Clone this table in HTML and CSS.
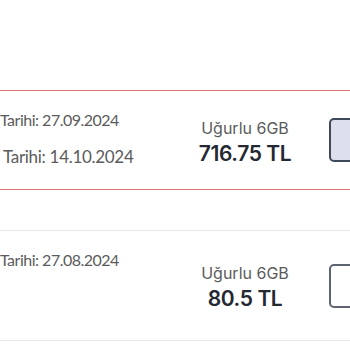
FILE: index.html
```html
<!DOCTYPE html>
<html lang="tr">
<head>
    <meta charset="UTF-8">
    <meta name="viewport" content="width=device-width, initial-scale=1.0">
    <title>Paketler</title>
    <link rel="stylesheet" href="styles.css">
</head>
<body>
    <div class="list">
        <div class="item selected">
            <div class="dates">
                <div class="date">Tarihi: 27.09.2024</div>
                <div class="date date-end">Tarihi: 14.10.2024</div>
            </div>
            <div class="package">
                <div class="package-name">Uğurlu 6GB</div>
                <div class="package-price">716.75 TL</div>
            </div>
            <div class="pick pick-active"></div>
        </div>

        <div class="item plain">
            <div class="dates">
                <div class="date">Tarihi: 27.08.2024</div>
            </div>
            <div class="package">
                <div class="package-name">Uğurlu 6GB</div>
                <div class="package-price">80.5 TL</div>
            </div>
            <div class="pick"></div>
        </div>
    </div>
</body>
</html>
```

FILE: styles.css
```css
body {
    margin: 0;
    padding: 0;
    background-color: #fff;
    overflow: hidden;
    font-family: 'Lato', sans-serif;
}
.list {
    width: 380px;
    padding-top: 90px;
}
.item {
    display: flex;
    align-items: center;
    box-sizing: border-box;
}
.selected {
    height: 100px;
    border-top: 1px solid #d77572;
    border-bottom: 1px solid #d77572;
}
.plain {
    height: 111px;
    margin-top: 40px;
    border-top: 1px solid #e8e8e8;
    border-bottom: 1px solid #e8e8e8;
}
.dates {
    flex: 0 0 180px;
    align-self: flex-start;
    padding-top: 19px;
}
.date {
    font-size: 16px;
    line-height: 20px;
    letter-spacing: -0.5px;
    color: #5b5b5b;
}
.date-end {
    margin-top: 17px;
    font-size: 17px;
    letter-spacing: -0.3px;
    padding-left: 3px;
}
.package {
    flex: 0 0 130px;
    padding-top: 3px;
    text-align: center;
    font-family: 'Inter', sans-serif;
}
.package-name {
    font-size: 16px;
    line-height: 22px;
    color: #5b5b5b;
}
.package-price {
    margin-top: 2px;
    font-size: 21px;
    line-height: 26px;
    font-weight: 600;
    letter-spacing: -0.4px;
    color: #242831;
}
.pick {
    flex: 0 0 40px;
    height: 44px;
    margin-left: 19px;
    box-sizing: border-box;
    border: 2px solid #5e6470;
    border-radius: 5px;
    background-color: #fff;
}
.pick-active {
    border-color: #3e4a5c;
    background-color: #dde0ec;
}
```
